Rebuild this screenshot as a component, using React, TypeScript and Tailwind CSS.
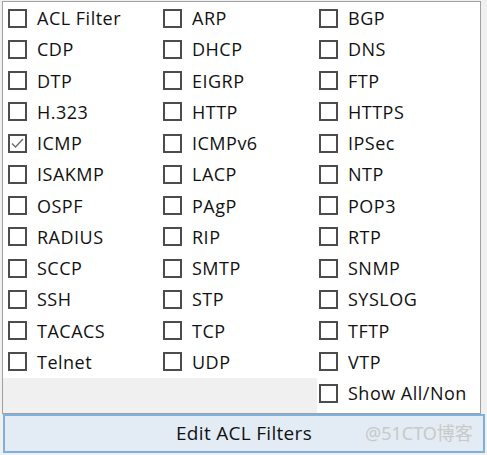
const col1 = ['ACL Filter', 'CDP', 'DTP', 'H.323', 'ICMP', 'ISAKMP', 'OSPF', 'RADIUS', 'SCCP', 'SSH', 'TACACS', 'Telnet'];
const col2 = ['ARP', 'DHCP', 'EIGRP', 'HTTP', 'ICMPv6', 'LACP', 'PAgP', 'RIP', 'SMTP', 'STP', 'TCP', 'UDP'];
const col3 = ['BGP', 'DNS', 'FTP', 'HTTPS', 'IPSec', 'NTP', 'POP3', 'RTP', 'SNMP', 'SYSLOG', 'TFTP', 'VTP', 'Show All/Non'];

const checked = new Set(['ICMP']);

function CheckRow({ label }: { label: string }) {
  const isChecked = checked.has(label);
  return (
    <div className="h-[31.25px] flex items-center gap-[10px] whitespace-nowrap">
      <span className="w-[19px] h-[19px] shrink-0 border-2 border-[#4c4c4c] bg-white flex items-center justify-center">
        {isChecked && (
          <svg width="15" height="15" viewBox="0 0 15 15">
            <path d="M2 7.5 L5.5 11 L13 3" fill="none" stroke="#6b6b6b" strokeWidth="1.4" />
          </svg>
        )}
      </span>
      <span className="text-[18px] leading-none tracking-[0.5px] text-[#111]">{label}</span>
    </div>
  );
}

export default function App() {
  return (
    <div className="relative w-[487px] h-[455px] bg-[#f0f0f0] pt-[1px] font-['Open_Sans','Noto_Sans',sans-serif] overflow-hidden">
      <div className="ml-[2px] w-[479px] h-[413px] border border-[#a0a0a0] flex bg-[#f0f0f0]">
        <div className="w-[314px] flex flex-col">
          <div className="flex bg-white pt-[0.5px]">
            <div className="w-[157px] pl-[5px]">
              {col1.map((l) => (
                <CheckRow key={l} label={l} />
              ))}
            </div>
            <div className="w-[157px] pl-[3px]">
              {col2.map((l) => (
                <CheckRow key={l} label={l} />
              ))}
            </div>
          </div>
        </div>
        <div className="flex-1 bg-white pl-[2px] pt-[0.5px]">
          {col3.map((l) => (
            <CheckRow key={l} label={l} />
          ))}
        </div>
      </div>
      <button className="ml-[3px] w-[482px] h-[39px] border-2 border-[#7eb1e0] bg-[#e3ebf4] text-[19px] tracking-[0.3px] text-[#111] flex items-center justify-center">
        Edit ACL Filters
      </button>
      <span className="absolute left-[365px] top-[422px] text-[18px] leading-[22px] text-[#c9c9c9] font-['Noto_Sans','Noto_Sans_CJK_SC',sans-serif]">
        @51CTO博客
      </span>
    </div>
  );
}
